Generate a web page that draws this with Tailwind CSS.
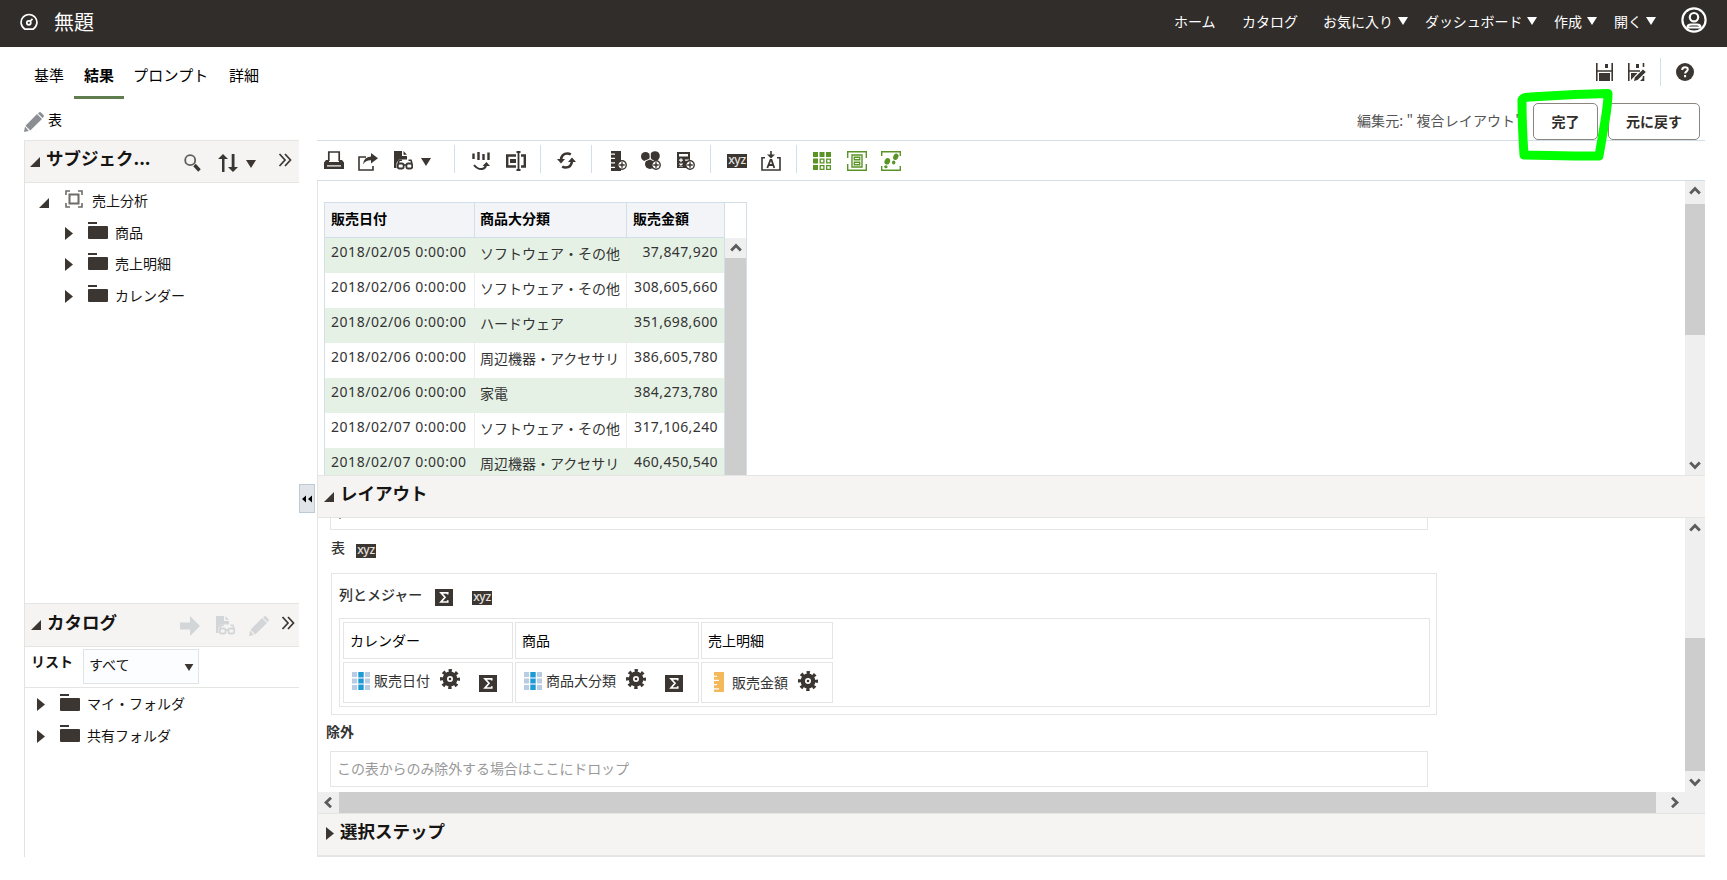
<!DOCTYPE html>
<html lang="ja">

<head>
  <meta charset="UTF-8">
  <meta name="viewport" content="width=device-width, initial-scale=1.0">
  <script src="https://cdn.jsdelivr.net/npm/@tailwindcss/browser@4"></script>
  <title>無題</title>
</head>

<body class="w-[1727px] h-[880px] overflow-hidden bg-white font-['Noto_Sans_CJK_JP','Noto_Sans',sans-serif] text-sm text-black">
  <!-- Icons -->
  <svg class="hidden">
    <symbol id="folder" viewBox="0 0 20 17"><path fill="currentColor" d="M0 0h9v2H0zM1 4h18a1 1 0 0 1 1 1v11a1 1 0 0 1-1 1H1a1 1 0 0 1-1-1V5a1 1 0 0 1 1-1z" /></symbol>
    <symbol id="open" viewBox="0 0 10 10"><path fill="currentColor" d="M10 0v10H0z" /></symbol>
    <symbol id="closed" viewBox="0 0 8 13"><path fill="currentColor" d="M0 0l8 6.500-8 6.500z" /></symbol>
    <symbol id="caret" viewBox="0 0 10 8"><path fill="currentColor" d="M0 0h10L5 8z" /></symbol>
    <symbol id="more" viewBox="0 0 14 14"><path fill="none" stroke="currentColor" stroke-width="1.700" d="M1.500 1l5.500 6-5.500 6M7 1l5.500 6L7 13" /></symbol>
    <symbol id="pencil" viewBox="0 0 20 20"><path fill="currentColor" d="M0 20l1-5.500L4.800 19zM1.500 13.700L13 2l5 5L6.300 18.500zM14 1.500L15 .5q1-.8 2 0L19.500 3q.8 1 0 2l-1 1z" /></symbol>
    <symbol id="docglass" viewBox="0 0 19 19">
      <path fill="currentColor" d="M0 0h8v5h5v3.500H5L2.500 12v5H0zM9.500 0L13 3.800H9.500z" />
      <path fill="none" stroke="currentColor" stroke-width="1.600" d="M4 12.500l1.200-3.200H8M18 12.500l-1-3.200h-2.500M9.500 14h3" />
      <rect x="3.800" y="12.500" width="5.800" height="5" rx="1.800" fill="none" stroke="currentColor" stroke-width="1.800" />
      <rect x="12.400" y="12.500" width="5.800" height="5" rx="1.800" fill="none" stroke="currentColor" stroke-width="1.800" />
    </symbol>
    <symbol id="gear" viewBox="0 0 20 20">
      <circle cx="10" cy="10" r="5.200" fill="none" stroke="currentColor" stroke-width="4.400" />
      <circle cx="10" cy="10" r="8.300" fill="none" stroke="currentColor" stroke-width="3.400" stroke-dasharray="3.260 3.260" stroke-dashoffset="1.630" />
      <circle cx="10" cy="10" r="1.300" fill="currentColor" />
    </symbol>
    <symbol id="sigma" viewBox="0 0 18 17"><path fill="#3b3631" d="M0 0h18v17H0z" /><path fill="none" stroke="#fff" stroke-width="1.700" d="M12.700 5.500V3.800H6L10 8.300 6 13h6.700v-1.800" /></symbol>
    <symbol id="cols" viewBox="0 0 18 18">
      <path fill="#b7cde4" d="M0 0h5v5H0zM13 0h5v5h-5zM0 6.500h5v5H0zM13 6.500h5v5h-5zM0 13h5v5H0zM13 13h5v5h-5z" />
      <path fill="#1c9ad6" d="M6.300 0h5.400v5H6.300zM6.300 6.500h5.400v5H6.300zM6.300 13h5.400v5H6.300z" /><path fill="#9bcbe8" d="M6.300 5h5.400v1.500H6.300zM6.300 11.500h5.400V13H6.300z" />
    </symbol>
    <symbol id="chev" viewBox="0 0 12 9"><path fill="none" stroke="#5c5c5c" stroke-width="2.800" d="M1.200 7.500L6 2.500l4.800 5" /></symbol>
    <symbol id="plus" viewBox="0 0 10 10"><circle cx="5" cy="5" r="4.200" fill="#fff" stroke="currentColor" stroke-width="1.400" /><path stroke="currentColor" stroke-width="1.400" d="M2.300 5h5.400M5 2.300v5.400" /></symbol>
  </svg>

  <!-- Header -->
  <header class="flex h-[47px] items-center bg-[#312d2a] text-white">
    <svg class="ml-5 -mt-[3px] h-[18px] w-[18px]" viewBox="0 0 18 18" fill="none" stroke="#fff" stroke-width="1.700">
      <path d="M5 16.200a7.900 7.900 0 1 1 8 0z" /><circle cx="8.800" cy="9.800" r="2" /><path d="M10 8.400l2.500-2.600" />
    </svg>
    <h1 class="ml-4 -mt-[4px] w-[1120px] text-xl">無題</h1>
    <nav class="flex -mt-[6px] items-center whitespace-nowrap">
      <span class="w-[68px]">ホーム</span>
      <span class="w-[81px]">カタログ</span>
      <span class="w-[75px]">お気に入り</span>
      <svg class="w-[10px] h-2"><use href="#caret" /></svg>
      <span class="ml-[17px] w-[102px] tracking-[-0.1px]">ダッシュボード</span>
      <svg class="w-[10px] h-2"><use href="#caret" /></svg>
      <span class="ml-[17px] w-[33px]">作成</span>
      <svg class="w-[10px] h-2"><use href="#caret" /></svg>
      <span class="ml-[17px] w-[32px]">開く</span>
      <svg class="w-[10px] h-2"><use href="#caret" /></svg>
    </nav>
    <svg class="ml-[25px] -mt-[7px] h-[26px] w-[26px]" viewBox="0 0 26 26" fill="none" stroke="#fff" stroke-width="2.200">
      <circle cx="13" cy="13" r="11.600" /><circle cx="13" cy="10.200" r="4.200" /><path d="M6.500 20.500q0-3 3.500-3h6q3.500 0 3.500 3z" />
    </svg>
  </header>

  <!-- Tabs -->
  <div class="flex h-[53px]">
    <div class="flex h-[52px] pl-[34px] text-[15px] leading-[56px]">
      <span class="w-[40px]">基準</span>
      <span class="w-[50px] border-b-3 border-[#5f7d4f] text-center font-bold">結果</span>
      <span class="ml-[9px] w-[96px] tracking-[0.2px]">プロンプト</span>
      <span>詳細</span>
    </div>
    <div class="ml-auto mr-[33px] flex items-start pt-4 text-[#3b3631]">
      <svg class="h-[18px] w-[17px]" viewBox="0 0 17 18"><path fill="none" stroke="currentColor" stroke-width="1.600" d="M.8 0v18M16.200 0v18M0 8h17" /><path fill="currentColor" d="M9 1h3v4H9zM3 10h11v8H3z" /></svg>
      <svg class="ml-[15px] h-[18px] w-[18px]" viewBox="0 0 18 18"><path fill="none" stroke="currentColor" stroke-width="1.600" d="M.8 0v18M15.500 0v4M0 8h12M15.500 13v5" /><path fill="currentColor" d="M8 1h3v4H8zM3 10h6.500L3 17zM6 18l.8-3.500L15 6.500l2.800 2.500L9.500 17zM12 18l3-3v3z" /></svg>
      <span class="ml-[14px] -mt-[5px] h-7 w-px bg-[#d3dfe8]"></span>
      <svg class="ml-[15px] h-[18px] w-[18px]" viewBox="0 0 18 18"><circle cx="9" cy="9" r="9" fill="currentColor" /><path fill="none" stroke="#fff" stroke-width="2" d="M6.200 6.900q0-2.600 2.900-2.600 2.700 0 2.700 2.300c0 1.700-2.700 1.900-2.700 4M9.100 12v2.200" /></svg>
    </div>
  </div>

  <!-- View name and edit buttons -->
  <div class="flex h-[40px] items-start">
    <svg class="ml-6 mt-3 h-5 w-5 text-[#8b8f93]"><use href="#pencil" /></svg>
    <span class="ml-1 mt-[9px]">表</span>
    <span class="ml-auto mt-[10px] w-[176px] whitespace-nowrap tracking-[0.1px] text-[#555]">編集元: " 複合レイアウト"</span>
    <button class="relative z-10 mt-[3px] h-[37px] w-[65px] rounded-[5px] border border-[#8b8580] bg-white pb-[2px] font-bold text-[#312d2a]">完了</button>
    <button class="relative z-10 mr-[27px] mt-[3px] ml-[10px] h-[37px] w-[92px] rounded-[5px] border border-[#8b8580] bg-white pb-[2px] font-bold text-[#312d2a]">元に戻す</button>
  </div>

  <main class="flex h-[717px]">
    <!-- Left panes -->
    <aside class="ml-6 w-[275px] border-l border-[#e1e3e5] text-[#161513]">
      <div class="flex h-[43px] items-center border-y border-[#e5e5e4] bg-[#f5f4f2] text-[#3b3631]">
        <svg class="ml-[5px] mt-px h-[10px] w-[10px]"><use href="#open" /></svg>
        <h2 class="ml-[6px] -mt-[9px] w-[138px] whitespace-nowrap text-[17.5px] font-bold text-[#161513]">サブジェク...</h2>
        <svg class="mt-[2px] h-[18px] w-[17px]" viewBox="0 0 17 18" fill="none" stroke="currentColor"><circle cx="6.200" cy="6.200" r="5" stroke-width="1.800" stroke-opacity=".8" /><path stroke-width="3.400" d="M10.500 11l5 5.500" /></svg>
        <svg class="ml-[17px] mt-[2px] h-[18px] w-5" viewBox="0 0 20 18"><path fill="currentColor" d="M4 18V5H0l5-5 5 5H6.500v13zM13.700 0v13H10l5 5 5-5h-3.500V0z" /></svg>
        <svg class="ml-2 mt-1 h-2 w-[10px]"><use href="#caret" /></svg>
        <svg class="ml-[22px] -mt-[4px] h-[14px] w-[14px]"><use href="#more" /></svg>
      </div>
      <div class="h-[420px] pt-[2px] leading-[30px]">
        <div class="flex h-[32px] items-center">
          <svg class="ml-[14px] mt-1 h-[10px] w-[10px] text-[#3b3631]"><use href="#open" /></svg>
          <svg class="ml-4 -mt-[4px] h-[18px] w-[18px]" viewBox="0 0 18 18" fill="none" stroke="#6f6b67" stroke-width="1.600"><path d="M1 5V1h4M13 1h4v4M17 13v4h-4M5 17H1v-4" /><path d="M4.500 4.500h9v9h-9z" stroke-width="2" /></svg>
          <span class="ml-[9px] -mt-[2px]">売上分析</span>
        </div>
        <div class="flex h-[31px] items-center">
          <svg class="ml-10 mt-[2px] h-[13px] w-2 text-[#3b3631]"><use href="#closed" /></svg>
          <svg class="ml-[15px] -mt-[4px] h-[17px] w-5 text-[#3b3631]"><use href="#folder" /></svg>
          <span class="ml-[7px] -mt-px">商品</span>
        </div>
        <div class="flex h-[32px] items-center">
          <svg class="ml-10 mt-px h-[13px] w-2 text-[#3b3631]"><use href="#closed" /></svg>
          <svg class="ml-[15px] -mt-[5px] h-[17px] w-5 text-[#3b3631]"><use href="#folder" /></svg>
          <span class="ml-[7px] -mt-[2px]">売上明細</span>
        </div>
        <div class="flex h-[31px] items-center">
          <svg class="ml-10 mt-[2px] h-[13px] w-2 text-[#3b3631]"><use href="#closed" /></svg>
          <svg class="ml-[15px] -mt-[4px] h-[17px] w-5 text-[#3b3631]"><use href="#folder" /></svg>
          <span class="ml-[7px] -mt-px">カレンダー</span>
        </div>
      </div>
      <div class="flex h-[44px] items-center border-y border-[#e5e5e4] bg-[#f5f4f2] text-[#d3d6d8]">
        <svg class="ml-[6px] h-[10px] w-[10px] text-[#3b3631]"><use href="#open" /></svg>
        <h2 class="ml-[6px] -mt-[8px] w-[133px] text-[17.5px] font-bold text-[#161513]">カタログ</h2>
        <svg class="mt-[2px] h-5 w-5" viewBox="0 0 20 20"><path fill="currentColor" d="M0 6.500h10V0l10 10-10 10v-6.500H0z" /></svg>
        <svg class="mt-px ml-4 h-[19px] w-[19px]"><use href="#docglass" /></svg>
        <svg class="mt-[2px] ml-[14px] h-5 w-5"><use href="#pencil" /></svg>
        <svg class="ml-[12px] -mt-[4px] h-[14px] w-[14px] text-[#3b3631]"><use href="#more" /></svg>
      </div>
      <div class="flex h-[41px] items-start border-b border-[#e5e5e4]">
        <span class="ml-[6px] mt-[4px] w-[52px] font-bold">リスト</span>
        <div class="mt-[2px] flex h-[35px] w-[116px] items-center border border-[#dfe4e7] bg-[#fcfdff] pr-[6px] pl-[5px]">
          <span class="-mt-[5px]">すべて</span>
          <svg class="ml-auto mr-[-2px] mt-[2px] h-[7px] w-[10px] text-[#3b3631]"><use href="#caret" /></svg>
        </div>
      </div>
      <div class="flex h-[32px] items-center">
        <svg class="ml-3 mt-px h-[13px] w-2 text-[#3b3631]"><use href="#closed" /></svg>
        <svg class="ml-[15px] -mt-[3px] h-[17px] w-5 text-[#3b3631]"><use href="#folder" /></svg>
        <span class="ml-[7px] -mt-[2px]">マイ・フォルダ</span>
      </div>
      <div class="flex h-[31px] items-center">
        <svg class="ml-3 mt-[2px] h-[13px] w-2 text-[#3b3631]"><use href="#closed" /></svg>
        <svg class="ml-[15px] -mt-[4px] h-[17px] w-5 text-[#3b3631]"><use href="#folder" /></svg>
        <span class="ml-[7px] -mt-px">共有フォルダ</span>
      </div>
    </aside>

    <!-- Splitter handle -->
    <div class="mt-[344px] flex h-[29px] w-4 items-center justify-center border border-[#bccad6] bg-[#e1e5e9]">
      <svg class="h-2 w-3" viewBox="0 0 12 8"><path d="M5 .5v7L1 4zM11 .5v7L7 4z" /></svg>
    </div>

    <section class="ml-[2px] flex w-[1388px] flex-col">
      <!-- Toolbar -->
      <div class="flex h-[41px] items-center border-y border-[#d3dfe8] text-[#3b3631]">
        <svg class="ml-[7px] h-[19px] w-5" viewBox="0 0 20 19"><path fill="none" stroke="currentColor" stroke-width="1.700" d="M4.800 10V1h10.400v9" /><path fill="currentColor" d="M2 9h3v2h10V9h3l2 2.500V18H0v-6.500z" /><path fill="#fff" d="M3 14.300h14v1.200H3z" /></svg>
        <svg class="ml-[14px] mt-[2px] h-[19px] w-5" viewBox="0 0 20 19"><path fill="none" stroke="currentColor" stroke-width="1.600" d="M8 5H1v13h14v-4" /><path fill="currentColor" d="M5 12.500Q5.500 5 13 4.500V1l7 5.200-7 5.300V8.300Q8 8 5 12.500z" /></svg>
        <svg class="ml-4 h-[19px] w-[19px]"><use href="#docglass" /></svg>
        <svg class="ml-2 mt-[3px] h-2 w-[10px]"><use href="#caret" /></svg>
        <span class="ml-[23px] -mt-[3px] h-7 w-px bg-[#d3dfe8]"></span>
        <svg class="ml-[17px] h-[20px] w-[18px]" viewBox="0 0 18 20"><path fill="none" stroke="currentColor" stroke-width="2.400" d="M1.500 2.500V8M6.500 1v8M11.500 3v6M16.500 1.500V9" /><path fill="none" stroke="currentColor" stroke-width="2" d="M2 14q3.500 4.500 8 4 3.500-.5 4-4" /><path fill="currentColor" d="M10.500 15l4-4 3.500 4z" /></svg>
        <svg class="ml-[16px] h-[20px] w-[20px]" viewBox="0 0 20 20"><path fill="none" stroke="currentColor" stroke-width="2.400" d="M10 4.500H1.200v11H10M15 4.500h3.800v11H15" /><path fill="none" stroke="currentColor" stroke-width="1.800" d="M12.500 1.500v17M10.500 1h4M10.500 19h4" /><path fill="currentColor" d="M4 8h6v4H4z" /></svg>
        <span class="ml-[14px] -mt-[3px] h-7 w-px bg-[#d3dfe8]"></span>
        <svg class="ml-[16px] h-[19px] w-[19px]" viewBox="0 0 19 19"><path fill="none" stroke="currentColor" stroke-width="2.600" d="M4 9Q4.500 2.500 10.500 2.500q1.800 0 3.300 1M15 10q-.5 6.500-6.500 6.500-1.800 0-3.300-1" /><path fill="currentColor" d="M0 8h8l-4 4.500zM11 11h8l-4-4.500z" /></svg>
        <span class="ml-[15px] -mt-[3px] h-7 w-px bg-[#d3dfe8]"></span>
        <svg class="ml-[19px] h-[20px] w-4" viewBox="0 0 16 20"><path fill="currentColor" d="M0 0h10v20H0v-3h4v-1.300H0v-3.200h4v-1.300H0V8h4V6.700H0V3.800h4V2.500H0z" /><svg x="6" y="9" width="10" height="10"><use href="#plus" /></svg></svg>
        <svg class="ml-[14px] h-[19px] w-5" viewBox="0 0 20 19"><circle cx="4.500" cy="5.500" r="4.500" fill="currentColor" /><circle cx="14" cy="5" r="4.800" fill="currentColor" /><circle cx="9" cy="13" r="5" fill="currentColor" /><path stroke="#fff" d="M9.200 3v5M4 10l5-2 4 2" fill="none" /><svg x="10" y="9" width="10" height="10"><use href="#plus" /></svg></svg>
        <svg class="ml-[16px] h-[18px] w-[18px]" viewBox="0 0 18 18"><path fill="currentColor" d="M0 0h13v16H0z" /><path fill="#fff" d="M2 2h9v2.500H2z" /><path stroke="#fff" stroke-width="1.200" d="M2 8.200h4M4 6.200v4M8 8.200h4M2.500 11.500l3 3M5.500 11.500l-3 3" /><svg x="8" y="8" width="10" height="10"><use href="#plus" /></svg></svg>
        <span class="ml-[15px] -mt-[3px] h-7 w-px bg-[#d3dfe8]"></span>
        <span class="ml-4 h-[14px] w-5 bg-[#3b3631] text-center font-['Noto_Sans',sans-serif] text-[12px] leading-[11px] font-medium tracking-[-0.3px] text-[#e4e2df]">xyz</span>
        <svg class="ml-[14px] h-5 w-5" viewBox="0 0 20 20"><path fill="none" stroke="currentColor" stroke-width="1.600" d="M4 6.800H1V19h18V6.800h-3M10 0v5" /><path fill="currentColor" d="M6 3.500h8L10 7.500z" /><path fill="none" stroke="currentColor" stroke-width="1.800" d="M6.300 17L9.500 9h1l2.800 8M7.500 14h5" /></svg>
        <span class="ml-[15px] -mt-[3px] h-7 w-px bg-[#d3dfe8]"></span>
        <svg class="ml-4 h-[18px] w-[18px]" viewBox="0 0 18 18" fill="#5a9426"><path d="M0 0h5v5H0zM6.500 0h5v5h-5zM13 0h5v5h-5zM0 6.500h5v5H0zM0 13h5v5H0z" /><path fill="none" stroke="#5a9426" stroke-width="1.300" d="M7.200 7.200h3.700v3.700H7.200zM13.700 7.200h3.700v3.700h-3.700zM7.200 13.700h3.700v3.700H7.200zM13.700 13.700h3.700v3.700h-3.700z" /></svg>
        <svg class="ml-4 h-5 w-5" viewBox="0 0 20 20" fill="none" stroke="#5a9426" stroke-width="1.400"><path d="M.7 7V.7h18.600V7M.7 13v6.300h18.600V13M5 4h10v12H5zM7.300 6.200h5.400v2.600H7.300zM7.300 11.200h5.400v2.600H7.300z" /></svg>
        <svg class="ml-[14px] h-5 w-5" viewBox="0 0 20 20" fill="#5a9426"><path fill="none" stroke="#5a9426" stroke-width="1.400" d="M.7 5V.7h18.600V5M.7 15v4.300h18.600V15" /><ellipse cx="6.300" cy="10.300" rx="2.700" ry="3.300" transform="rotate(25 6.300 10.300)" /><ellipse cx="4.900" cy="15.700" rx="1.700" ry="1.500" /><ellipse cx="14.800" cy="5.800" rx="2.500" ry="3.300" transform="rotate(25 14.800 5.800)" /><ellipse cx="12.700" cy="11.600" rx="1.700" ry="2" /></svg>
      </div>

      <!-- Results table -->
      <div class="flex h-[294px] border-l border-[#e5e5e4]">
        <div class="ml-[6px] mt-[21px] h-[273px] w-[400px] overflow-hidden border-l border-[#d3dfe8]">
          <div class="flex h-[36px] border-y border-[#d3dfe8] bg-[#f2f4f8] font-bold leading-[30px]">
            <div class="w-[150px] border-r border-[#d3dfe8] pl-[6px]">販売日付</div>
            <div class="w-[152px] border-r border-[#d3dfe8] pl-[5px]">商品大分類</div>
            <div class="w-[97px] pl-[6px]">販売金額</div>
          </div>
          <div id="rows" class="text-[#333]"></div>
        </div>
        <div class="mt-[21px] flex w-[23px] flex-col border-t border-r border-l border-[#d3dfe8]">
          <div class="h-[35px]"></div>
          <div class="flex h-5 items-center justify-center bg-[#efefef]"><svg class="-mt-[2px] h-[9px] w-3"><use href="#chev" /></svg></div>
          <div class="flex-1 bg-[#cdcdcd]"></div>
        </div>
        <div class="ml-auto flex w-5 flex-col items-center bg-[#efefef]">
          <svg class="mt-[5px] h-[9px] w-3"><use href="#chev" /></svg>
          <div class="mt-[9px] h-[131px] w-full bg-[#cdcdcd]"></div>
          <svg class="mt-auto mb-[5px] h-[9px] w-3 rotate-180"><use href="#chev" /></svg>
        </div>
      </div>

      <!-- Layout editor -->
      <div class="flex h-[43px] items-center border-y border-l border-[#e5e5e4] bg-[#f5f4f2]">
        <svg class="ml-[6px] h-[10px] w-[10px] text-[#3b3631]"><use href="#open" /></svg>
        <h2 class="ml-[6px] -mt-[9px] text-[17.5px] font-bold text-[#161513]">レイアウト</h2>
      </div>
      <div class="flex h-[274px] border-l border-[#e5e5e4]">
        <div class="w-[1367px] text-[#333]">
          <div class="ml-3 h-3 w-[1098px] border-x border-b border-[#e5e5e5]"><div class="ml-2 h-px w-[2px] bg-[#999]"></div></div>
          <div class="flex h-[43px] items-start pl-[13px] font-medium">
            <span class="mt-[7px]">表</span>
            <span class="ml-[11px] mt-[14px] h-[14px] w-5 bg-[#3b3631] text-center font-['Noto_Sans',sans-serif] text-[12px] leading-[11px] tracking-[-0.3px] text-[#e4e2df]">xyz</span>
          </div>
          <div class="ml-[13px] h-[142px] w-[1106px] border border-[#e5e5e5] pl-[7px]">
            <div class="flex h-[44px] items-start font-medium">
              <span class="mt-[10px] w-[96px]">列とメジャー</span>
              <svg class="mt-[15px] h-[17px] w-[18px]"><use href="#sigma" /></svg>
              <span class="ml-[19px] mt-[17px] h-[14px] w-5 bg-[#3b3631] text-center font-['Noto_Sans',sans-serif] text-[12px] leading-[11px] tracking-[-0.3px] text-[#e4e2df]">xyz</span>
            </div>
            <div class="grid h-[89px] w-[1091px] grid-cols-[170px_184px_132px] grid-rows-[37px_41px] content-start gap-x-[2px] gap-y-[3px] border border-[#e5e5e5] p-[3px]">
              <div class="border border-[#e5e5e5] pl-[6px] leading-[34px] text-black">カレンダー</div>
              <div class="border border-[#e5e5e5] pl-[6px] leading-[34px] text-black">商品</div>
              <div class="border border-[#e5e5e5] pl-[6px] leading-[34px] text-black">売上明細</div>
              <div class="flex items-center border border-[#e5e5e5] pl-2">
                <svg class="-mt-[3px] h-[18px] w-[18px]"><use href="#cols" /></svg>
                <span class="ml-1 -mt-[5px] w-[66px]">販売日付</span>
                <svg class="-mt-[7px] h-5 w-5 text-[#3b3631]"><use href="#gear" /></svg>
                <svg class="ml-[19px] mt-[2px] h-[17px] w-[18px]"><use href="#sigma" /></svg>
              </div>
              <div class="flex items-center border border-[#e5e5e5] pl-2">
                <svg class="-mt-[3px] h-[18px] w-[18px]"><use href="#cols" /></svg>
                <span class="ml-1 -mt-[5px] w-[80px]">商品大分類</span>
                <svg class="-mt-[7px] h-5 w-5 text-[#3b3631]"><use href="#gear" /></svg>
                <svg class="ml-[19px] mt-[2px] h-[17px] w-[18px]"><use href="#sigma" /></svg>
              </div>
              <div class="flex items-center border border-[#e5e5e5] pl-[12px]">
                <svg class="-mt-px h-5 w-[10px]" viewBox="0 0 10 20"><path fill="#f5b95c" d="M0 0h10v20H0v-2.500h5v-1.300H0v-3h3v-1.200H0V9h5V7.700H0V5h3V3.700H0z" /></svg>
                <span class="ml-[8px] -mt-[2px] w-[66px]">販売金額</span>
                <svg class="-mt-[3px] h-5 w-5 text-[#3b3631]"><use href="#gear" /></svg>
              </div>
            </div>
          </div>
          <div class="h-[36px] pl-[8px] pt-[6px] font-bold">除外</div>
          <div class="ml-3 h-[36px] w-[1098px] border border-[#e5e5e5] pl-[6px] leading-[32px] tracking-[-0.1px] text-[#999]">この表からのみ除外する場合はここにドロップ</div>
        </div>
        <div class="flex w-5 flex-col items-center bg-[#efefef]">
          <svg class="mt-[5px] h-[9px] w-3"><use href="#chev" /></svg>
          <div class="mt-[106px] h-[133px] w-full bg-[#cdcdcd]"></div>
          <svg class="mt-[7px] h-[9px] w-3 rotate-180"><use href="#chev" /></svg>
        </div>
      </div>
      <div class="flex h-[21px] items-center border-l border-[#e5e5e4] bg-[#efefef]">
        <svg class="ml-1 mr-[5px] h-[9px] w-3 -rotate-90"><use href="#chev" /></svg>
        <div class="h-full w-[1317px] bg-[#cdcdcd]"></div>
        <svg class="ml-[13px] h-[9px] w-3 rotate-90"><use href="#chev" /></svg>
      </div>

      <!-- Selection steps -->
      <div class="flex h-[44px] items-center border-t border-b-2 border-l border-[#e5e5e4] bg-[#f5f4f2]">
        <svg class="ml-2 -mt-[2px] h-[13px] w-2 text-[#3b3631]"><use href="#closed" /></svg>
        <h2 class="ml-[6px] -mt-[8px] text-[17.5px] font-bold text-[#161513]">選択ステップ</h2>
      </div>
    </section>
  </main>

  <!-- Marker drawn round the Done button -->
  <svg class="absolute left-[1510px] top-[80px] z-20 h-[90px] w-[110px]" viewBox="1510 80 110 90">
    <path d="M1522 100Q1523 97 1530 97L1575 94.500 1608 93.500Q1608 103 1605 121L1599 156 1575 156 1524 155Q1522 125 1522 100z" fill="none" stroke="#00ff00" stroke-width="9" stroke-linejoin="round" />
  </svg>

  <script>
    const rows = [
      ["2018/02/05 0:00:00", "ソフトウェア・その他", "37,847,920"],
      ["2018/02/06 0:00:00", "ソフトウェア・その他", "308,605,660"],
      ["2018/02/06 0:00:00", "ハードウェア", "351,698,600"],
      ["2018/02/06 0:00:00", "周辺機器・アクセサリ", "386,605,780"],
      ["2018/02/06 0:00:00", "家電", "384,273,780"],
      ["2018/02/07 0:00:00", "ソフトウェア・その他", "317,106,240"],
      ["2018/02/07 0:00:00", "周辺機器・アクセサリ", "460,450,540"],
    ];

    document.getElementById("rows").innerHTML = rows.map(([date, category, amount]) => `
      <div class="flex h-[35px] whitespace-nowrap leading-[28px] odd:bg-[#e6f1e6]">
        <div class="w-[150px] border-r border-[#ececec] pl-[6px] font-['Noto_Sans',sans-serif] tracking-[0.55px]">${date}</div>
        <div class="w-[152px] border-r border-[#ececec] pl-[5px] pt-px">${category}</div>
        <div class="w-[97px] pr-[6px] text-right font-['Noto_Sans',sans-serif] tracking-[0.4px]">${amount}</div>
      </div>`).join("");
  </script>
</body>

</html>
